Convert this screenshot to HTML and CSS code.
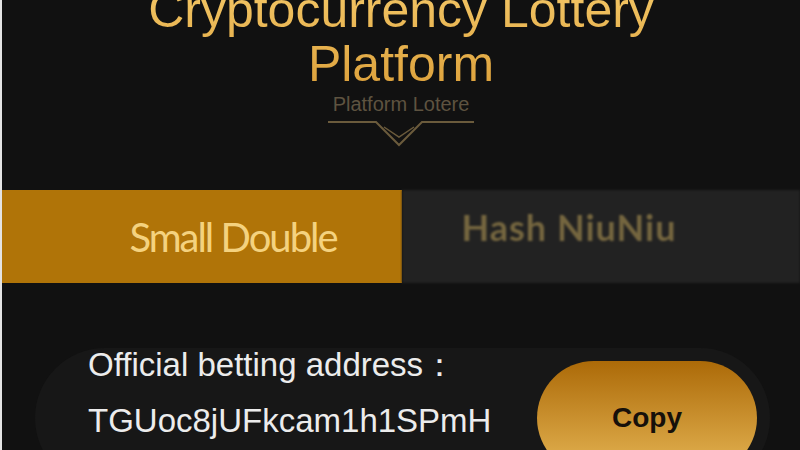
FILE: index.html
```html
<!DOCTYPE html>
<html lang="en">
<head>
    <meta charset="UTF-8">
    <meta name="viewport" content="width=device-width, initial-scale=1.0">
    <title>Cryptocurrency Lottery Platform</title>
    <link rel="stylesheet" href="styles.css">
</head>
<body>
    <div class="page">
        <header class="hero">
            <h1 class="title">Cryptocurrency Lottery<br>Platform</h1>
            <p class="subtitle">Platform Lotere</p>
            <svg class="divider" width="146" height="30" viewBox="0 0 146 30">
                <path d="M0 4 H48 L71 27 L94 4 H146" fill="none" stroke="#6b5b3c" stroke-width="2"/>
                <path d="M56 9 L71 19 L86 9" fill="none" stroke="#6b5b3c" stroke-width="1.5"/>
            </svg>
        </header>

        <nav class="tabs">
            <div class="tab tab-active">Small Double</div>
            <div class="tab tab-muted">Hash NiuNiu</div>
        </nav>

        <section class="address-card">
            <div class="address-info">
                <p class="label">Official betting address：</p>
                <p class="address">TGUoc8jUFkcam1h1SPmH</p>
            </div>
            <button class="copy-btn">Copy</button>
        </section>
    </div>
</body>
</html>
```

FILE: styles.css
```css
body {
    margin: 0;
    background-color: #e4e4e4;
    font-family: 'Liberation Sans', Arial, sans-serif;
    overflow: hidden;
}
.page {
    margin-left: 2px;
    min-height: 450px;
    background-color: #111111;
}
.hero {
    text-align: center;
}
.title {
    margin: -17px 0 0;
    font-size: 50px;
    line-height: 54px;
    font-weight: 400;
    background: linear-gradient(180deg, #f4c868 0%, #dca03a 100%);
    -webkit-background-clip: text;
    background-clip: text;
    color: transparent;
}
.subtitle {
    margin: 1px 0 0;
    font-size: 20px;
    line-height: 24px;
    color: #5e5340;
}
.divider {
    display: block;
    margin: 2px auto 0;
}

/* tabs */
.tabs {
    display: flex;
    height: 93px;
    margin-top: 42px;
}
.tab {
    display: flex;
    align-items: center;
    justify-content: center;
    font-family: Lato, sans-serif;
}
.tab-active {
    width: 400px;
    box-sizing: border-box;
    background-color: #b07408;
    color: #f4d27f;
    font-size: 40px;
    letter-spacing: -2px;
    padding-left: 62px;
}
.tab-muted {
    flex: 1;
    background-color: #222222;
    color: #75663f;
    font-size: 36px;
    font-weight: 700;
    letter-spacing: 1px;
    padding-right: 64px;
    padding-bottom: 20px;
    filter: blur(0.8px);
}

/* address card */
.address-card {
    display: flex;
    justify-content: space-between;
    height: 140px;
    margin: 65px 30px 0 33px;
    border-radius: 70px;
    background-color: #171717;
}
.address-info {
    padding-left: 53px;
}
.label, .address {
    font-size: 33px;
    line-height: 36px;
    color: #ececec;
}
.label {
    margin: -1px 0 0;
}
.address {
    margin: 20px 0 0;
}
.copy-btn {
    width: 220px;
    height: 114px;
    margin: 13px 13px 0 0;
    border: none;
    border-radius: 57px;
    background: linear-gradient(180deg, #ac6a08 0%, #e6b655 100%);
    font-family: 'Liberation Sans', Arial, sans-serif;
    font-size: 28px;
    font-weight: 700;
    color: #16100a;
    cursor: pointer;
}
```
